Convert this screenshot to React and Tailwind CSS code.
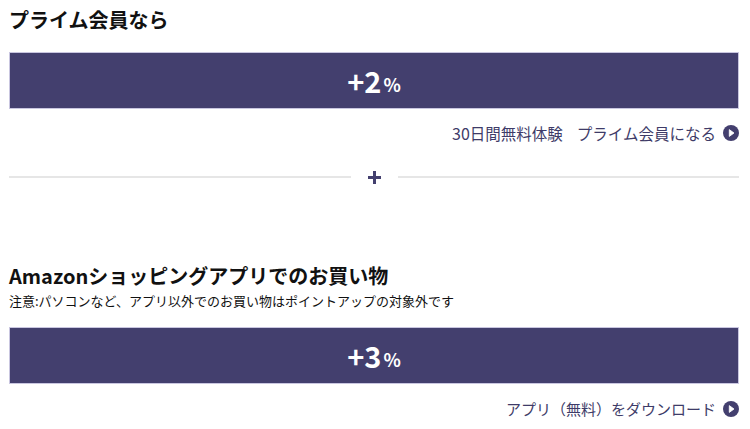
import React from "react";

const font = { fontFamily: '"Noto Sans CJK JP", "Noto Sans", sans-serif' };

function PlayCircle() {
  return (
    <svg width="16" height="16" viewBox="0 0 16 16" className="shrink-0">
      <circle cx="8" cy="8" r="8" fill="#433f6e" />
      <path d="M6.3 4.6 L11 8 L6.3 11.4 Z" fill="#fff" strokeLinejoin="round" stroke="#fff" strokeWidth="0.8" />
    </svg>
  );
}

function RateBar({ value }) {
  return (
    <div className="h-[57px] bg-[#433f6e] border border-[#c9c6e0] flex items-center justify-center text-white">
      <span className="text-[29px] font-bold leading-none">+{value}</span>
      <span className="text-[18px] font-bold leading-none ml-[2px] mt-[6px]">%</span>
    </div>
  );
}

export default function App() {
  return (
    <div className="w-[750px] h-[429px] bg-white overflow-hidden pl-[9px] pr-[11px]" style={font}>
      <div className="pt-[6px] h-[34px] text-[20px] font-bold leading-[28px] text-[#111]">プライム会員なら</div>
      <div className="mt-[18px]">
        <RateBar value="2" />
      </div>
      <div className="mt-[14px] h-[20px] flex items-center justify-end gap-[7px] text-[15.5px] leading-[20px] text-[#3e3b68]">
        <span>
          <span className="text-[16px]">30</span>日間無料体験<span className="inline-block w-[14px]"></span>プライム会員になる
        </span>
        <PlayCircle />
      </div>
      <div className="mt-[23px] h-[22px] flex items-center">
        <div className="flex-1 h-[2px] bg-[#e6e6e6]"></div>
        <div className="w-[47px] flex justify-center">
          <svg width="13" height="13" viewBox="0 0 13 13">
            <path d="M6.5 0 V13 M0 6.5 H13" stroke="#433f6e" strokeWidth="3" />
          </svg>
        </div>
        <div className="flex-1 h-[2px] bg-[#e6e6e6]"></div>
      </div>
      <div className="mt-[74px] text-[20px] font-bold leading-[28px] text-[#111]">Amazonショッピングアプリでのお買い物</div>
      <div className="mt-[1px] text-[13px] leading-[20px] text-[#111]">注意:パソコンなど、アプリ以外でのお買い物はポイントアップの対象外です</div>
      <div className="mt-[16px]">
        <RateBar value="3" />
      </div>
      <div className="mt-[15px] h-[20px] flex items-center justify-end gap-[7px] text-[15px] leading-[20px] text-[#3e3b68]">
        <span>アプリ（無料）をダウンロード</span>
        <PlayCircle />
      </div>
    </div>
  );
}
